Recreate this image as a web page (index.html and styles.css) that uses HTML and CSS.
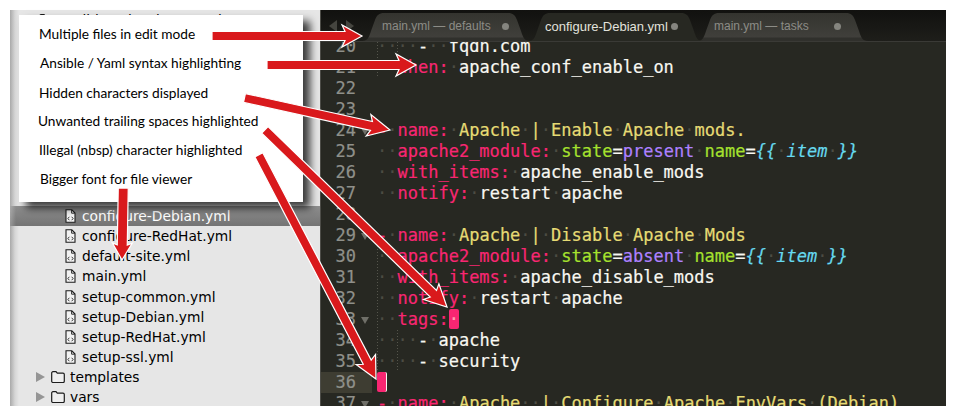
FILE: index.html
```html
<!DOCTYPE html>
<html lang="en">
<head>
<meta charset="utf-8">
<title>Sublime Text YAML</title>
<link rel="stylesheet" href="styles.css">
</head>
<body>
<div class="window">
  <aside class="sidebar">
    <div class="row folder-row lvl0"><span class="tri"></span><svg class="folder" viewBox="0 0 14 12"><use href="#dir"/></svg>ansible_role_php_mysql</div>
    <div class="spacer"></div>
    <div class="row file selected"><svg class="file-ic" viewBox="0 0 11 14"><use href="#doc"/></svg>configure-Debian.yml</div>
    <div class="row file"><svg class="file-ic" viewBox="0 0 11 14"><use href="#doc"/></svg>configure-RedHat.yml</div>
    <div class="row file"><svg class="file-ic" viewBox="0 0 11 14"><use href="#doc"/></svg>default-site.yml</div>
    <div class="row file"><svg class="file-ic" viewBox="0 0 11 14"><use href="#doc"/></svg>main.yml</div>
    <div class="row file"><svg class="file-ic" viewBox="0 0 11 14"><use href="#doc"/></svg>setup-common.yml</div>
    <div class="row file"><svg class="file-ic" viewBox="0 0 11 14"><use href="#doc"/></svg>setup-Debian.yml</div>
    <div class="row file"><svg class="file-ic" viewBox="0 0 11 14"><use href="#doc"/></svg>setup-RedHat.yml</div>
    <div class="row file"><svg class="file-ic" viewBox="0 0 11 14"><use href="#doc"/></svg>setup-ssl.yml</div>
    <div class="row folder-row"><span class="tri"></span><svg class="folder" viewBox="0 0 14 12"><use href="#dir"/></svg>templates</div>
    <div class="row folder-row"><span class="tri"></span><svg class="folder" viewBox="0 0 14 12"><use href="#dir"/></svg>vars</div>
  </aside>
  <main class="editor">
    <div class="tabbar">
      <div class="nav"><span class="nav-l"></span><span class="nav-r"></span></div>
      <div class="tab t1"><span class="tab-label">main.yml — defaults</span><span class="dot"></span></div>
      <div class="tab t2"><span class="tab-label">configure-Debian.yml</span><span class="dot"></span></div>
      <div class="tab t3"><span class="tab-label">main.yml — tasks</span><span class="dot"></span></div>
    </div>
    <div class="code">
      <div class="line"><span class="num">20</span><span class="fold"></span><span class="txt g1 g2"><i class="w">····</i>-<i class="w">··</i>fqdn.com</span></div>
      <div class="line"><span class="num">21</span><span class="fold"></span><span class="txt g1"><i class="w">··</i><b class="k">when:</b><i class="w">·</i>apache_conf_enable_on</span></div>
      <div class="line"><span class="num">22</span><span class="fold"></span><span class="txt"></span></div>
      <div class="line"><span class="num">23</span><span class="fold"></span><span class="txt"></span></div>
      <div class="line"><span class="num">24</span><span class="fold on"></span><span class="txt"><b class="k">-</b><i class="w">·</i><b class="k">name:</b><i class="w">·</i><b class="s">Apache<i class="w">·</i>|<i class="w">·</i>Enable<i class="w">·</i>Apache<i class="w">·</i>mods.</b></span></div>
      <div class="line"><span class="num">25</span><span class="fold"></span><span class="txt"><i class="w">··</i><b class="k">apache2_module:</b><i class="w">·</i><b class="g">state</b>=<b class="p">present</b><i class="w">·</i><b class="g">name</b>=<em class="c">{{<i class="w">·</i>item<i class="w">·</i>}}</em></span></div>
      <div class="line"><span class="num">26</span><span class="fold"></span><span class="txt"><i class="w">··</i><b class="k">with_items:</b><i class="w">·</i>apache_enable_mods</span></div>
      <div class="line"><span class="num">27</span><span class="fold"></span><span class="txt"><i class="w">··</i><b class="k">notify:</b><i class="w">·</i>restart<i class="w">·</i>apache</span></div>
      <div class="line"><span class="num">28</span><span class="fold"></span><span class="txt"></span></div>
      <div class="line"><span class="num">29</span><span class="fold on"></span><span class="txt"><b class="k">-</b><i class="w">·</i><b class="k">name:</b><i class="w">·</i><b class="s">Apache<i class="w">·</i>|<i class="w">·</i>Disable<i class="w">·</i>Apache<i class="w">·</i>Mods</b></span></div>
      <div class="line"><span class="num">30</span><span class="fold"></span><span class="txt g1"><i class="w">··</i><b class="k">apache2_module:</b><i class="w">·</i><b class="g">state</b>=<b class="p">absent</b><i class="w">·</i><b class="g">name</b>=<em class="c">{{<i class="w">·</i>item<i class="w">·</i>}}</em></span></div>
      <div class="line"><span class="num">31</span><span class="fold"></span><span class="txt g1"><i class="w">··</i><b class="k">with_items:</b><i class="w">·</i>apache_disable_mods</span></div>
      <div class="line"><span class="num">32</span><span class="fold"></span><span class="txt g1"><i class="w">··</i><b class="k">notify:</b><i class="w">·</i>restart<i class="w">·</i>apache</span></div>
      <div class="line"><span class="num">33</span><span class="fold on"></span><span class="txt g1"><i class="w">··</i><b class="k">tags:</b><i class="bad">·</i></span></div>
      <div class="line"><span class="num">34</span><span class="fold"></span><span class="txt g1 g2"><i class="w">····</i>-<i class="w">·</i>apache</span></div>
      <div class="line"><span class="num">35</span><span class="fold"></span><span class="txt g1 g2"><i class="w">····</i>-<i class="w">·</i>security</span></div>
      <div class="line current"><span class="num">36</span><span class="fold"></span><span class="txt"><i class="bad caret"> </i></span></div>
      <div class="line"><span class="num">37</span><span class="fold on"></span><span class="txt"><b class="k">-</b><i class="w">·</i><b class="k">name:</b><i class="w">·</i><b class="s">Apache<i class="w">··</i>|<i class="w">·</i>Configure<i class="w">·</i>Apache<i class="w">·</i>EnvVars<i class="w">·</i>(Debian).</b></span></div>
    </div>
  </main>
</div>

<ul class="notes">
  <li class="n1">Multiple files in edit mode</li>
  <li class="n2">Ansible / Yaml syntax highlighting</li>
  <li class="n4">Hidden characters displayed</li>
  <li class="n3">Unwanted trailing spaces highlighted</li>
  <li class="n1">Illegal (nbsp) character highlighted</li>
  <li class="n2">Bigger font for file viewer</li>
</ul>

<svg class="arrows" viewBox="0 0 958 416" aria-hidden="true">
  <defs>
    <g id="doc"><path d="M1 .8h5.800l3.200 3.200v9.200H1z" fill="#f2f2f2" stroke="#1c1c1c" stroke-width="1.100"/><path d="M6.600 1v3.200h3.200" fill="none" stroke="#1c1c1c" stroke-width=".9"/><path d="M4.300 7.800 2.900 9.500l1.400 1.700M6.700 7.800l1.400 1.700-1.400 1.700" fill="none" stroke="#222" stroke-width=".9"/></g>
    <g id="dir"><path d="M.7 2a1.300 1.300 0 0 1 1.300-1.300h3l1.300 1.500h5.700a1.300 1.300 0 0 1 1.300 1.300v6.700a1.300 1.300 0 0 1-1.300 1.300H2a1.300 1.300 0 0 1-1.300-1.300z" fill="#efefef" stroke="#1c1c1c" stroke-width="1.200"/></g>
  </defs>
  <g class="arrow">
    <path transform="translate(362 36)" d="M0 0-20-11-17-4.500H-150V4.500H-17L-20 11Z"/>
    <path transform="translate(416 65)" d="M0 0-20-11-17-4.500H-149V4.500H-17L-20 11Z"/>
    <path transform="translate(390 130) rotate(12.400)" d="M0 0-22-11-19-4.500H-149V4.500H-19L-22 11Z"/>
    <path transform="translate(447 307) rotate(44.200)" d="M0 0-22-11-19-4.500H-254V4.500H-19L-22 11Z"/>
    <path transform="translate(376 379) rotate(62.400)" d="M0 0-22-11-19-4.500H-253V4.500H-19L-22 11Z"/>
    <path transform="translate(122 260) rotate(91)" d="M0 0-17-10-15-5H-72V5H-15L-17 10Z"/>
  </g>
</svg>
</body>
</html>
```
FILE: styles.css
```css
* { box-sizing: border-box; }
html, body { margin: 0; height: 100%; background: #fff; overflow: hidden; }
body { padding: 10px 12px 10px 10px; position: relative; }

.window { display: flex; height: 396px; overflow: hidden; }

.sidebar {
  width: 310px;
  flex: none;
  background: linear-gradient(90deg, #a9a9a9 0, #d6d6d6 5px, #e6e6e6 9px);
  font: 13.8px "DejaVu Sans", sans-serif;
  color: #000;
}
.row { height: 20.1px; display: flex; align-items: center; white-space: nowrap; }
.spacer { height: 176px; }
.file { padding-left: 55px; }
.selected {
  background: linear-gradient(90deg, rgba(255, 255, 255, .25), transparent 6px), linear-gradient(#8e8e8e, #747474);
  color: #fff;
}
.folder-row { padding-left: 26px; gap: 6px; }
.lvl0 { padding-left: 14px; }
.tri { width: 0; height: 0; border-left: 9px solid #959595; border-top: 5px solid transparent; border-bottom: 5px solid transparent; }
.folder { width: 14px; height: 12px; margin-right: -1px; }
.file-ic { width: 11px; height: 14px; margin-right: 6px; flex: none; }

.editor { flex: 1; background: #272822; border-left: 1px solid #4d4d48; display: flex; flex-direction: column; min-width: 0; }
.tabbar {
  height: 32px; flex: none; display: flex; align-items: flex-end;
  background: linear-gradient(#11110f, #1e1e1a);
  border-bottom: 1px solid #3a3a36;
  position: relative; z-index: 1; padding-left: 7px;
}
.nav { width: 34px; height: 28px; display: flex; gap: 9px; align-items: center; padding: 0 0 3px 1px; flex: none; }
.nav-l, .nav-r { width: 0; height: 0; border-top: 6px solid transparent; border-bottom: 6px solid transparent; }
.nav-l { border-right: 8px solid #45453f; }
.nav-r { border-left: 8px solid #45453f; }
.tab {
  height: 28px; padding-bottom: 2px; flex: none;
  display: flex; align-items: center; justify-content: space-between;
  font: 12px "Liberation Sans", sans-serif; color: #8c8c86;
  background: linear-gradient(#34342f 0, #403f3b 85%, #30302c 90%);
}
.tab .dot { width: 7px; height: 7px; border-radius: 50%; background: #85857f; }
.t1 {
  width: 168px; padding-left: 20px; margin-right: -2px;
  clip-path: path("M0 28C6 28 7 24 9 18L13 7C15 2 17 0 22 0H146C151 0 153 2 155 7L159 18C161 24 162 28 168 28Z");
}
.t1 .dot { margin-right: 21px; }
.t2 {
  width: 175px; padding-left: 17px; margin-right: -6px; z-index: 2;
  background: #272822; color: #e2e2dc; font-size: 13px;
  clip-path: path("M0 28C6 28 7 24 9 18L13 7C15 2 17 0 22 0H153C158 0 160 2 162 7L166 18C168 24 169 28 175 28Z");
}
.t2 .dot { margin-right: 25px; }
.t3 {
  width: 171px; padding-left: 17px;
  clip-path: path("M0 28C6 28 7 24 9 18L13 7C15 2 17 0 22 0H149C154 0 156 2 158 7L162 18C164 24 165 28 171 28Z");
}
.t3 .dot { margin-right: 27px; }

.code {
  margin-top: -6px;
  font: 17px/21px "DejaVu Sans Mono", monospace;
  color: #f8f8f2;
  -webkit-text-stroke: .2px currentColor;
}
.line { display: flex; height: 21px; white-space: pre; }
.num { width: 35px; text-align: right; color: #8f908a; flex: none; }
.fold { width: 16px; flex: none; position: relative; }
.fold.on::after {
  content: ""; position: absolute; left: 5px; top: 8px;
  border-left: 4.500px solid transparent; border-right: 4.500px solid transparent; border-top: 7px solid #6f6f68;
}
.txt { padding-left: 5px; flex: 1; }
.g1 { background: repeating-linear-gradient(#55554c 0 1px, transparent 1px 3px) 5px 0 / 1px 100% no-repeat; }
.g1.g2 {
  background:
    repeating-linear-gradient(#55554c 0 1px, transparent 1px 3px) 5px 0 / 1px 100% no-repeat,
    repeating-linear-gradient(#55554c 0 1px, transparent 1px 3px) 25px 0 / 1px 100% no-repeat;
}
.current .num, .current .fold { background: #3e3d32; }
b, em, i { font-weight: normal; font-style: normal; }
.w { color: #4c4c43; -webkit-text-stroke: 0; }
.k { color: #f92672; }
.s { color: #e6db74; }
.g { color: #a6e22e; }
.p { color: #ae81ff; }
.c { color: #66d9ef; font-style: italic; }
.bad { display: inline-block; width: 10.230px; height: 20px; background: #f92672; color: #ff9fb0; border-radius: 2px; vertical-align: top; }
.caret { border-right: 1px solid #f8f8f2; }

.notes {
  position: absolute; left: 19px; top: 15px; z-index: 4; width: 284px; height: 187px;
  margin: 0; padding: 4px 0 0 20px; list-style: none;
  background: #fff;
  box-shadow: 7px 6px 8px rgba(0, 0, 0, .75);
  font: 13.700px "Lato", sans-serif; color: #000;
  display: flex; flex-direction: column;
}
.notes li { height: 29px; line-height: 29px; white-space: nowrap; }
.n2 { padding-left: 1px; }
.n3 { margin-left: -1px; }
.n4 { margin-top: 1px; margin-bottom: -1px; }

.arrows { position: absolute; left: 0; top: 0; z-index: 5; width: 958px; height: 416px; pointer-events: none; }
.arrow path { fill: #d9191c; stroke: #fff; stroke-width: 1.200; }
```
